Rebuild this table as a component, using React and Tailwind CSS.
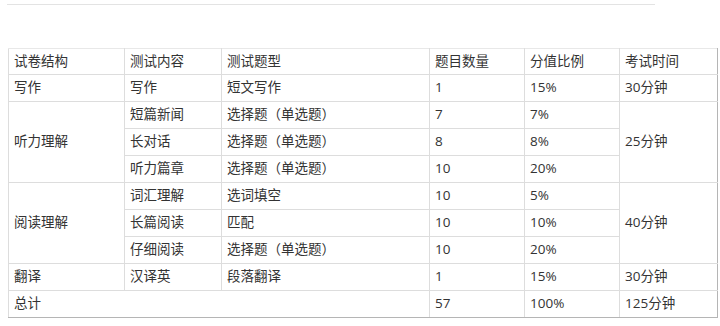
import React from "react";

const F = { fontFamily: '"Open Sans", "Noto Sans CJK SC", sans-serif' };

const td = "border border-[#dddddd] px-[5px] py-0 align-middle text-left font-normal";
const rt = " border-r-[#b5b5b5]";
const bt = " border-b-[#b5b5b5]";

export default function App() {
  return (
    <div className="bg-white w-[720px] h-[326px] overflow-hidden text-[#333333]" style={F}>
      <div className="ml-[7px] mt-[4px] w-[648px] h-px bg-[#e3e3e3]" />
      <table className="ml-[8px] mt-[43px] border-collapse text-[13.5px] leading-none table-fixed w-[709px]">
        <colgroup>
          <col className="w-[116px]" />
          <col className="w-[97px]" />
          <col className="w-[208px]" />
          <col className="w-[95px]" />
          <col className="w-[95px]" />
          <col className="w-[98px]" />
        </colgroup>
        <tbody>
          <tr className="h-[26px]">
            <td className={td + " border-t-[#e8e8e8]"}>试卷结构</td>
            <td className={td + " border-t-[#e8e8e8]"}>测试内容</td>
            <td className={td + " border-t-[#e8e8e8]"}>测试题型</td>
            <td className={td + " border-t-[#e8e8e8]"}>题目数量</td>
            <td className={td + " border-t-[#e8e8e8]"}>分值比例</td>
            <td className={td + " border-t-[#e8e8e8]" + rt}>考试时间</td>
          </tr>
          <tr className="h-[27px]">
            <td className={td}>写作</td>
            <td className={td}>写作</td>
            <td className={td}>短文写作</td>
            <td className={td}>1</td>
            <td className={td}>15%</td>
            <td className={td + rt}>30分钟</td>
          </tr>
          <tr className="h-[27px]">
            <td className={td} rowSpan={3}>听力理解</td>
            <td className={td}>短篇新闻</td>
            <td className={td}>选择题（单选题）</td>
            <td className={td}>7</td>
            <td className={td}>7%</td>
            <td className={td + rt} rowSpan={3}>25分钟</td>
          </tr>
          <tr className="h-[27px]">
            <td className={td}>长对话</td>
            <td className={td}>选择题（单选题）</td>
            <td className={td}>8</td>
            <td className={td}>8%</td>
          </tr>
          <tr className="h-[27px]">
            <td className={td}>听力篇章</td>
            <td className={td}>选择题（单选题）</td>
            <td className={td}>10</td>
            <td className={td}>20%</td>
          </tr>
          <tr className="h-[27px]">
            <td className={td} rowSpan={3}>阅读理解</td>
            <td className={td}>词汇理解</td>
            <td className={td}>选词填空</td>
            <td className={td}>10</td>
            <td className={td}>5%</td>
            <td className={td + rt} rowSpan={3}>40分钟</td>
          </tr>
          <tr className="h-[27px]">
            <td className={td}>长篇阅读</td>
            <td className={td}>匹配</td>
            <td className={td}>10</td>
            <td className={td}>10%</td>
          </tr>
          <tr className="h-[27px]">
            <td className={td}>仔细阅读</td>
            <td className={td}>选择题（单选题）</td>
            <td className={td}>10</td>
            <td className={td}>20%</td>
          </tr>
          <tr className="h-[27px]">
            <td className={td}>翻译</td>
            <td className={td}>汉译英</td>
            <td className={td}>段落翻译</td>
            <td className={td}>1</td>
            <td className={td}>15%</td>
            <td className={td + rt}>30分钟</td>
          </tr>
          <tr className="h-[27px]">
            <td className={td + bt} colSpan={3}>总计</td>
            <td className={td + bt}>57</td>
            <td className={td + bt}>100%</td>
            <td className={td + bt + rt}>125分钟</td>
          </tr>
        </tbody>
      </table>
    </div>
  );
}
